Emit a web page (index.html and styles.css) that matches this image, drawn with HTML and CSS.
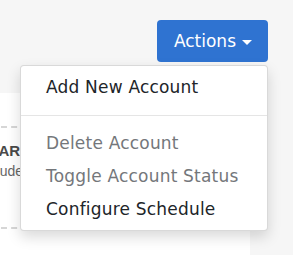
FILE: index.html
```html
<!DOCTYPE html>
<html lang="en">
<head>
    <meta charset="UTF-8">
    <meta name="viewport" content="width=device-width, initial-scale=1.0">
    <title>Accounts</title>
    <link rel="stylesheet" href="styles.css">
</head>
<body>
    <div class="toolbar">
        <div class="btn-group">
            <button class="btn-actions">Actions <span class="caret"></span></button>
            <ul class="dropdown-menu">
                <li><a href="#" class="dropdown-item">Add New Account</a></li>
                <li class="divider"></li>
                <li><a href="#" class="dropdown-item disabled">Delete Account</a></li>
                <li><a href="#" class="dropdown-item disabled">Toggle Account Status</a></li>
                <li><a href="#" class="dropdown-item">Configure Schedule</a></li>
            </ul>
        </div>
    </div>

    <section class="card">
        <div class="upload-box">
            <h3 class="upload-title">CALENDAR</h3>
            <p class="upload-note">Include only csv files</p>
        </div>
    </section>
</body>
</html>
```

FILE: styles.css
```css
:root {
    --primary: #2f73d1;
    --text: #212529;
    --muted: #74777b;
    --page-bg: #f6f6f6;
}
* {
    margin: 0;
    padding: 0;
    box-sizing: border-box;
}
body {
    font-family: "DejaVu Sans", "Liberation Sans", sans-serif;
    background: var(--page-bg);
    color: var(--text);
    overflow: hidden;
}
.toolbar {
    display: flex;
    justify-content: flex-end;
    padding: 20px 25px 0 0;
}
.btn-group {
    position: relative;
}
.btn-actions {
    display: flex;
    align-items: center;
    gap: 6px;
    height: 42px;
    padding: 0 16px 0 17px;
    background: var(--primary);
    color: #fff;
    border: none;
    border-radius: 4px;
    font-family: inherit;
    font-size: 17px;
}
.caret {
    width: 0;
    height: 0;
    border-top: 5px solid #fff;
    border-left: 5px solid transparent;
    border-right: 5px solid transparent;
    margin-top: 2px;
}
.dropdown-menu {
    position: absolute;
    top: 45px;
    right: 0;
    width: 248px;
    list-style: none;
    padding: 5px 0 4px;
    background: #fff;
    border: 1px solid rgba(0, 0, 0, 0.15);
    border-radius: 4px;
    box-shadow: 0 6px 14px rgba(0, 0, 0, 0.15);
    z-index: 10;
}
.dropdown-item {
    display: block;
    padding: 0 25px;
    line-height: 33px;
    font-size: 17px;
    letter-spacing: 0.2px;
    color: var(--text);
    text-decoration: none;
    white-space: nowrap;
}
.dropdown-item.disabled {
    color: var(--muted);
}
.divider {
    height: 1px;
    margin: 11px 0;
    background: #e5e5e5;
}
.card {
    width: 330px;
    height: 200px;
    margin: 31px 0 0 -80px;
    padding-top: 33px;
    background: #fff;
    overflow: hidden;
}
.upload-box {
    height: 103px;
    border: 2px dashed #d6d6d6;
    padding-top: 14px;
    white-space: nowrap;
    font-family: "Liberation Sans", sans-serif;
}
.upload-title {
    font-size: 15px;
    font-weight: 700;
    color: #4a4a4a;
    padding-left: 14px;
}
.upload-note {
    margin-top: 4px;
    font-size: 14px;
    color: #666;
    padding-left: 56px;
}
```
